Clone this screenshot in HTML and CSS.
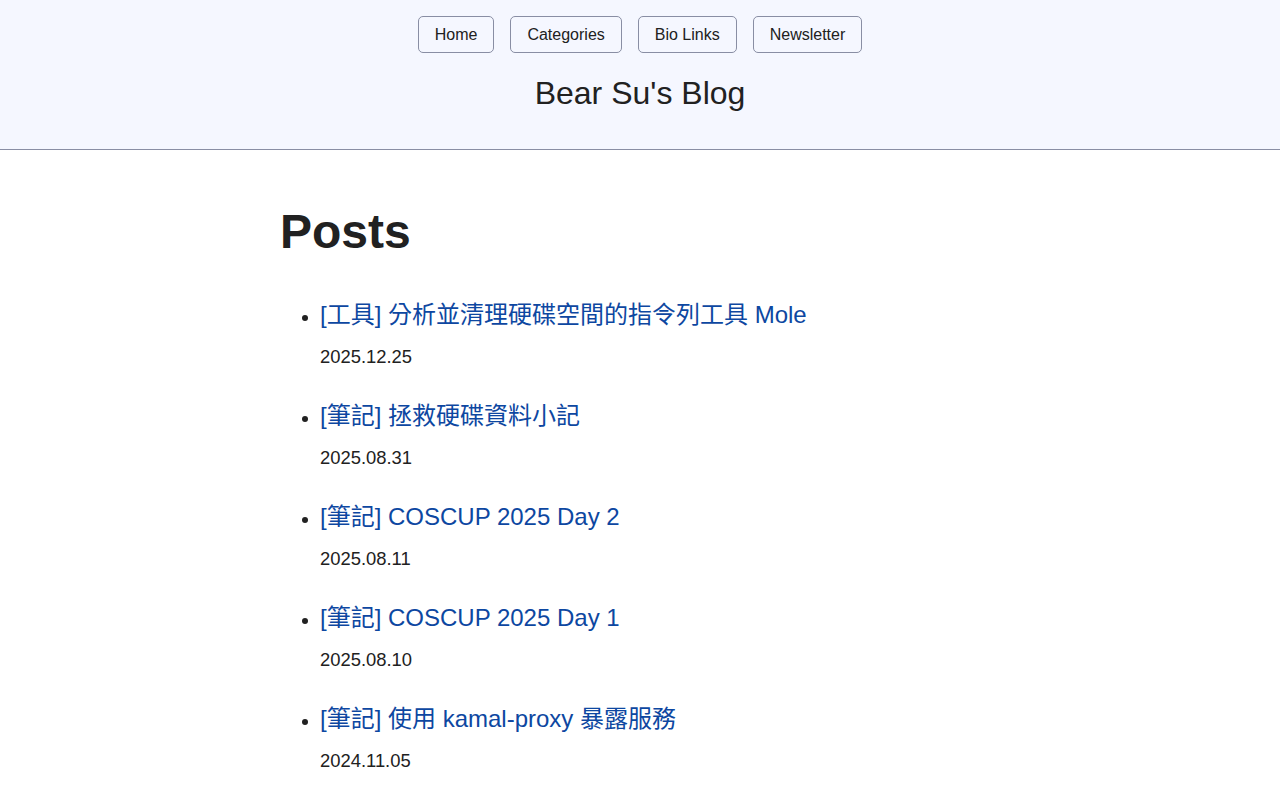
FILE: index.html
```html
<!DOCTYPE html>
<html lang="zh-Hant">
<head>
<meta charset="utf-8">
<title>Bear Su's Blog</title>
<link rel="stylesheet" href="styles.css">
</head>
<body>
<header class="site-header">
  <nav class="nav">
    <a class="nav-btn" href="#">Home</a>
    <a class="nav-btn" href="#">Categories</a>
    <a class="nav-btn" href="#">Bio Links</a>
    <a class="nav-btn" href="#">Newsletter</a>
  </nav>
  <div class="site-title">Bear Su's Blog</div>
</header>
<main class="main">
  <h1 class="page-title">Posts</h1>
  <ul class="post-list">
    <li class="post">
      <div class="post-link"><a href="#">[工具] 分析並清理硬碟空間的指令列工具 Mole</a></div>
      <div class="post-date">2025.12.25</div>
    </li>
    <li class="post">
      <div class="post-link"><a href="#">[筆記] 拯救硬碟資料小記</a></div>
      <div class="post-date">2025.08.31</div>
    </li>
    <li class="post">
      <div class="post-link"><a href="#">[筆記] COSCUP 2025 Day 2</a></div>
      <div class="post-date">2025.08.11</div>
    </li>
    <li class="post">
      <div class="post-link"><a href="#">[筆記] COSCUP 2025 Day 1</a></div>
      <div class="post-date">2025.08.10</div>
    </li>
    <li class="post">
      <div class="post-link"><a href="#">[筆記] 使用 kamal-proxy 暴露服務</a></div>
      <div class="post-date">2024.11.05</div>
    </li>
  </ul>
</main>
</body>
</html>
```
FILE: styles.css
```css
html, body {
  margin: 0;
  padding: 0;
}
body {
  font-family: "Liberation Sans", "Noto Sans CJK TC", sans-serif;
  color: #212121;
  background: #ffffff;
  font-size: 18.4px;
  line-height: 1.5;
}
.site-header {
  background: #f5f7ff;
  border-bottom: 1px solid #898ea4;
  padding: 16px 8px 32px;
  text-align: center;
}
.nav {
  display: flex;
  justify-content: center;
  gap: 16px;
  font-size: 16px;
  line-height: 2;
}
.nav-btn {
  display: inline-block;
  border: 1px solid #898ea4;
  border-radius: 5px;
  padding: 1.6px 16px;
  color: #212121;
  text-decoration: none;
}
.site-title {
  margin-top: 16px;
  font-size: 32px;
  line-height: 48px;
}
.main {
  width: 720px;
  margin: 0 auto;
}
.page-title {
  margin: 56px 0 0;
  font-size: 48px;
  line-height: 1.1;
  font-weight: bold;
}
.post-list {
  margin: 38px 0 0;
  padding-left: 40px;
}
.post {
  margin-bottom: 27px;
}
.post-link {
  font-size: 24px;
  line-height: 36px;
}
.post-link a {
  color: #0d47a1;
  text-decoration: none;
}
.post-date {
  margin-top: 10px;
  font-size: 18.4px;
  line-height: 28px;
}
```
